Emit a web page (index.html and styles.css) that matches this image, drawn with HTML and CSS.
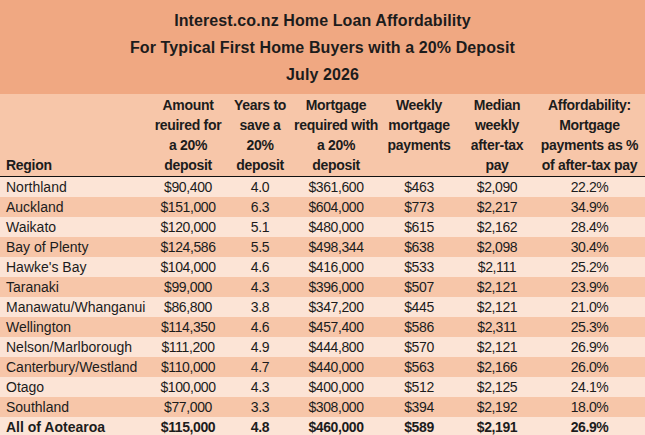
FILE: index.html
```html
<!DOCTYPE html>
<html>
<head>
<meta charset="utf-8">
<link rel="stylesheet" href="styles.css">
</head>
<body>
<div class="sheet">
  <div class="title">
    <div>Interest.co.nz Home Loan Affordability</div>
    <div>For Typical First Home Buyers with a 20% Deposit</div>
    <div>July 2026</div>
  </div>
  <div class="row head">
    <div class="c region">Region</div>
    <div class="c">Amount<br>reuired for<br>a 20%<br>deposit</div>
    <div class="c">Years to<br>save a<br>20%<br>deposit</div>
    <div class="c">Mortgage<br>required with<br>a 20%<br>deposit</div>
    <div class="c">Weekly<br>mortgage<br>payments</div>
    <div class="c">Median<br>weekly<br>after-tax<br>pay</div>
    <div class="c">Affordability:<br>Mortgage<br>payments as %<br>of after-tax pay</div>
  </div>
  <div class="row light"><div class="c region">Northland</div><div class="c">$90,400</div><div class="c">4.0</div><div class="c">$361,600</div><div class="c">$463</div><div class="c">$2,090</div><div class="c">22.2%</div></div>
  <div class="row dark"><div class="c region">Auckland</div><div class="c">$151,000</div><div class="c">6.3</div><div class="c">$604,000</div><div class="c">$773</div><div class="c">$2,217</div><div class="c">34.9%</div></div>
  <div class="row light"><div class="c region">Waikato</div><div class="c">$120,000</div><div class="c">5.1</div><div class="c">$480,000</div><div class="c">$615</div><div class="c">$2,162</div><div class="c">28.4%</div></div>
  <div class="row dark"><div class="c region">Bay of Plenty</div><div class="c">$124,586</div><div class="c">5.5</div><div class="c">$498,344</div><div class="c">$638</div><div class="c">$2,098</div><div class="c">30.4%</div></div>
  <div class="row light"><div class="c region">Hawke's Bay</div><div class="c">$104,000</div><div class="c">4.6</div><div class="c">$416,000</div><div class="c">$533</div><div class="c">$2,111</div><div class="c">25.2%</div></div>
  <div class="row dark"><div class="c region">Taranaki</div><div class="c">$99,000</div><div class="c">4.3</div><div class="c">$396,000</div><div class="c">$507</div><div class="c">$2,121</div><div class="c">23.9%</div></div>
  <div class="row light"><div class="c region">Manawatu/Whanganui</div><div class="c">$86,800</div><div class="c">3.8</div><div class="c">$347,200</div><div class="c">$445</div><div class="c">$2,121</div><div class="c">21.0%</div></div>
  <div class="row dark"><div class="c region">Wellington</div><div class="c">$114,350</div><div class="c">4.6</div><div class="c">$457,400</div><div class="c">$586</div><div class="c">$2,311</div><div class="c">25.3%</div></div>
  <div class="row light"><div class="c region">Nelson/Marlborough</div><div class="c">$111,200</div><div class="c">4.9</div><div class="c">$444,800</div><div class="c">$570</div><div class="c">$2,121</div><div class="c">26.9%</div></div>
  <div class="row dark"><div class="c region">Canterbury/Westland</div><div class="c">$110,000</div><div class="c">4.7</div><div class="c">$440,000</div><div class="c">$563</div><div class="c">$2,166</div><div class="c">26.0%</div></div>
  <div class="row light"><div class="c region">Otago</div><div class="c">$100,000</div><div class="c">4.3</div><div class="c">$400,000</div><div class="c">$512</div><div class="c">$2,125</div><div class="c">24.1%</div></div>
  <div class="row dark"><div class="c region">Southland</div><div class="c">$77,000</div><div class="c">3.3</div><div class="c">$308,000</div><div class="c">$394</div><div class="c">$2,192</div><div class="c">18.0%</div></div>
  <div class="row light total"><div class="c region">All of Aotearoa</div><div class="c">$115,000</div><div class="c">4.8</div><div class="c">$460,000</div><div class="c">$589</div><div class="c">$2,191</div><div class="c">26.9%</div></div>
</div>
</body>
</html>
```

FILE: styles.css
```css
html, body {
  margin: 0;
  padding: 0;
  background: #fce4d6;
}
.sheet {
  width: 645px;
  font-family: "Liberation Sans", Arial, sans-serif;
  color: #1c1c1c;
}
.title {
  background: #f0a882;
  height: 94px;
  box-sizing: border-box;
  padding-top: 7px;
  text-align: center;
  font-weight: bold;
  font-size: 16px;
  line-height: 27px;
  letter-spacing: 0.1px;
}
.row {
  display: grid;
  grid-template-columns: 150px 76px 68px 84px 82px 74px 111px;
  height: 20px;
  line-height: 20px;
  font-size: 14px;
}
.c {
  text-align: center;
  white-space: nowrap;
  letter-spacing: -0.4px;
}
.c.region {
  text-align: left;
  padding-left: 6px;
  letter-spacing: 0;
}
.head {
  box-sizing: border-box;
  padding-top: 1px;
  background: #f7c6a9;
  font-weight: bold;
  border-bottom: 1.5px solid #111;
  height: 83px;
}
.head .c {
  letter-spacing: -0.3px;
}
.head .region {
  align-self: end;
  padding-bottom: 1px;
}
.light { background: #fce4d6; }
.dark { background: #f7c6a9; }
.total { font-weight: bold; }
```
